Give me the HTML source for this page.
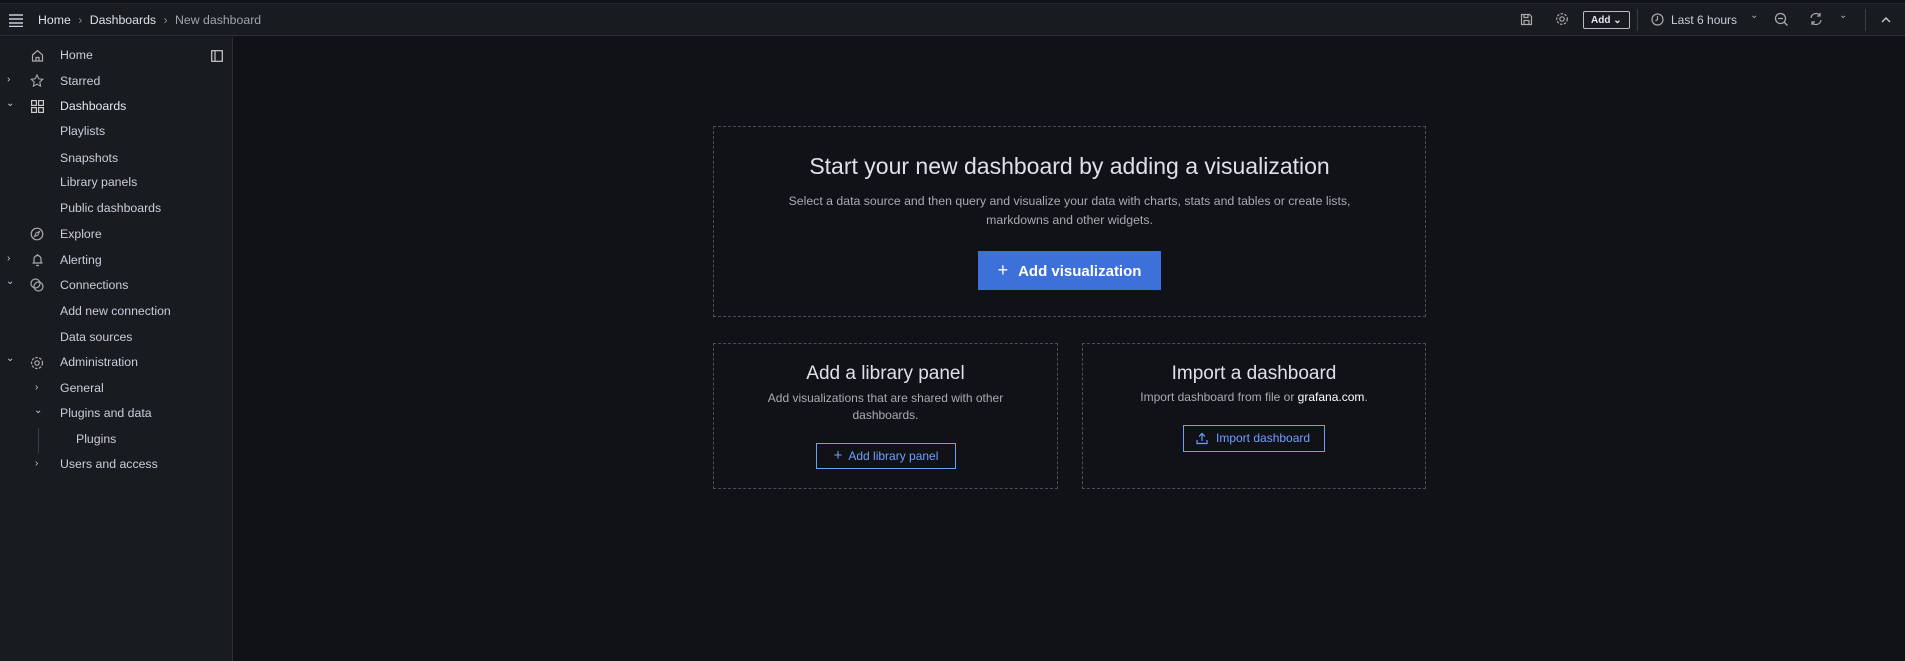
<!DOCTYPE html>
<html><head><meta charset="utf-8"><style>
*{box-sizing:border-box;margin:0;padding:0}
body{width:1905px;height:661px;background:#111217;font-family:"Liberation Sans",sans-serif;color:#ccccdc;position:relative;overflow:hidden}
.top{position:absolute;left:0;top:0;width:1905px;height:4px;background:#111217;border-bottom:1px solid #24272d}
.hdr{position:absolute;left:0;top:4px;width:1905px;height:32px;background:#181b1f;border-bottom:1px solid #2c2f35}
.side{position:absolute;left:0;top:37px;width:233px;height:624px;background:#181b1f;border-right:1px solid #2c2f35}
.a{position:absolute;white-space:nowrap}
.si{position:absolute;left:60px;font-size:12.3px;color:#ccccdc}
.chev{position:absolute;font-size:10px;color:#ccccdc}
.box{position:absolute;border:1px dashed #4a4d55}
.ctr{position:absolute;left:0;right:0;text-align:center}
svg{display:block}
</style></head><body>
<div class="top"></div>
<div class="hdr">
 <svg class="a" style="left:8px;top:9px" width="16" height="14"><path d="M1 2h14M1 6h14M1 10h14M1 13.5h14" stroke="#ccccdc" stroke-width="1.6"/></svg>
 <div class="a" style="left:38px;top:9px;font-size:12.3px;color:#e0e0ea">Home <span style="color:#888;margin:0 4px">›</span> Dashboards <span style="color:#888;margin:0 4px">›</span> <span style="color:#9fa3ad">New dashboard</span></div>
 <svg class="a" style="left:1520px;top:9px" width="13" height="13"><path d="M1.5 1.5h8l2 2v8h-10z M4 1.5v3h4v-3 M4 11.5v-4h5v4" fill="none" stroke="#aaa" stroke-width="1.2"/></svg>
 <svg class="a" style="left:1555px;top:8px" width="14" height="14"><circle cx="7" cy="7" r="2.2" fill="none" stroke="#aaa" stroke-width="1.2"/><circle cx="7" cy="7" r="5.3" fill="none" stroke="#aaa" stroke-width="1.2" stroke-dasharray="2.5 1.4"/></svg>
 <div class="a" style="left:1583px;top:7px;width:47px;height:18px;border:1px solid #bbb;border-radius:2px;font-size:10px;font-weight:bold;color:#e6e6f0;padding:3px 0 0 7px">Add ⌄</div>
 <div class="a" style="left:1637px;top:5px;width:1px;height:22px;background:#3a3d44"></div>
 <svg class="a" style="left:1651px;top:9px" width="13" height="13"><circle cx="6.5" cy="6.5" r="5.5" fill="none" stroke="#aaa" stroke-width="1.2"/><path d="M6.5 3v3.5l-2 1.5" fill="none" stroke="#aaa" stroke-width="1.2"/></svg>
 <div class="a" style="left:1671px;top:9px;font-size:12px;color:#ccccdc">Last 6 hours</div>
 <div class="a" style="left:1750px;top:6px;font-size:10px;color:#aaa">⌄</div>
 <svg class="a" style="left:1774px;top:8px" width="15" height="15"><circle cx="6.5" cy="6.5" r="5" fill="none" stroke="#aaa" stroke-width="1.3"/><path d="M4 6.5h5M10 10l3.5 3.5" stroke="#aaa" stroke-width="1.3"/></svg>
 <svg class="a" style="left:1809px;top:8px" width="14" height="14"><path d="M2 6a5 5 0 0 1 9-2.5M12 8a5 5 0 0 1-9 2.5M11 1v3h-3M3 13v-3h3" fill="none" stroke="#aaa" stroke-width="1.2"/></svg>
 <div class="a" style="left:1839px;top:6px;font-size:10px;color:#aaa">⌄</div>
 <div class="a" style="left:1865px;top:5px;width:1px;height:22px;background:#3a3d44"></div>
 <svg class="a" style="left:1881px;top:12px" width="10" height="7"><path d="M1 6l4-4 4 4" fill="none" stroke="#ccc" stroke-width="1.4"/></svg>
</div>
<div class="side">
 <svg class="a" style="left:211px;top:13px" width="12" height="12"><rect x="0.7" y="0.7" width="10.6" height="10.6" fill="none" stroke="#ccc" stroke-width="1.2"/><path d="M4 1v10" stroke="#ccc" stroke-width="1.2"/></svg>
</div>
<svg class="a" style="left:31px;top:49px" width="13" height="13"><path d="M1.5 6L6.5 1.5 11.5 6v6h-10z M5 12V8.5h3V12" fill="none" stroke="#aaa" stroke-width="1.2"/></svg>
<div class="si a" style="top:48px">Home</div>
<div class="chev a" style="left:7px;top:74px">›</div>
<svg class="a" style="left:30px;top:74px" width="14" height="13"><path d="M7 1l1.8 3.8 4 .5-3 2.8.8 4L7 10.2 3.4 12.1l.8-4-3-2.8 4-.5z" fill="none" stroke="#aaa" stroke-width="1.1"/></svg>
<div class="si a" style="top:74px">Starred</div>
<div class="chev a" style="left:6px;top:98px">⌄</div>
<svg class="a" style="left:31px;top:100px" width="13" height="13"><g fill="none" stroke="#ccc" stroke-width="1.2"><rect x=".6" y=".6" width="4.8" height="4.8"/><rect x="7.6" y=".6" width="4.8" height="4.8"/><rect x=".6" y="7.6" width="4.8" height="4.8"/><rect x="7.6" y="7.6" width="4.8" height="4.8"/></g></svg>
<div class="si a" style="top:99px;color:#e6e6f0">Dashboards</div>
<div class="si a" style="top:124px">Playlists</div>
<div class="si a" style="top:151px">Snapshots</div>
<div class="si a" style="top:175px">Library panels</div>
<div class="si a" style="top:201px">Public dashboards</div>
<svg class="a" style="left:30px;top:227px" width="14" height="14"><circle cx="7" cy="7" r="5.8" fill="none" stroke="#aaa" stroke-width="1.2"/><path d="M9.5 4.5L8 8 4.5 9.5 6 6z" fill="none" stroke="#aaa" stroke-width="1"/></svg>
<div class="si a" style="top:227px">Explore</div>
<div class="chev a" style="left:7px;top:253px">›</div>
<svg class="a" style="left:31px;top:253px" width="13" height="14"><path d="M3 10V6a3.5 3.5 0 0 1 7 0v4zM1.5 10h10M5 12.5h3M6.5 1v1" fill="none" stroke="#aaa" stroke-width="1.2"/></svg>
<div class="si a" style="top:253px">Alerting</div>
<div class="chev a" style="left:6px;top:276px">⌄</div>
<svg class="a" style="left:30px;top:278px" width="14" height="14"><circle cx="5.5" cy="5.5" r="4.5" fill="none" stroke="#aaa" stroke-width="1.2"/><circle cx="8.5" cy="8.5" r="4.5" fill="none" stroke="#aaa" stroke-width="1.2"/></svg>
<div class="si a" style="top:278px">Connections</div>
<div class="si a" style="top:304px">Add new connection</div>
<div class="si a" style="top:330px">Data sources</div>
<div class="chev a" style="left:6px;top:353px">⌄</div>
<svg class="a" style="left:30px;top:356px" width="14" height="14"><circle cx="7" cy="7" r="2.2" fill="none" stroke="#aaa" stroke-width="1.2"/><circle cx="7" cy="7" r="5.5" fill="none" stroke="#aaa" stroke-width="1.2" stroke-dasharray="2.6 1.4"/></svg>
<div class="si a" style="top:355px">Administration</div>
<div class="chev a" style="left:35px;top:382px">›</div>
<div class="si a" style="top:381px">General</div>
<div class="chev a" style="left:34px;top:405px">⌄</div>
<div class="si a" style="top:406px">Plugins and data</div>
<div class="a" style="left:38px;top:428px;width:1px;height:25px;background:#3a3d44"></div>
<div class="si a" style="left:76px;top:432px">Plugins</div>
<div class="chev a" style="left:35px;top:458px">›</div>
<div class="si a" style="top:457px">Users and access</div>

<div class="box" style="left:713px;top:126px;width:713px;height:191px">
 <div class="ctr" style="top:26px;font-size:23px;color:#e0e0ea">Start your new dashboard by adding a visualization</div>
 <div class="ctr" style="top:65px;font-size:12.3px;color:#a8abb5;line-height:19px">Select a data source and then query and visualize your data with charts, stats and tables or create lists,<br>markdowns and other widgets.</div>
 <div class="a" style="left:264px;top:124px;width:183px;height:39px;background:#3d71d9;color:#fff;font-size:15px;font-weight:bold;text-align:center;line-height:39px"><span style="font-weight:normal;font-size:18px;margin-right:10px">+</span>Add visualization</div>
</div>
<div class="box" style="left:713px;top:343px;width:345px;height:146px">
 <div class="ctr" style="top:19px;font-size:19px;color:#e0e0ea">Add a library panel</div>
 <div class="ctr" style="top:46px;font-size:12px;color:#a8abb5;line-height:17px">Add visualizations that are shared with other<br>dashboards.</div>
 <div class="a" style="left:102px;top:99px;width:140px;height:26px;border:1px solid #6e9fff;color:#6e9fff;font-size:12px;text-align:center;line-height:24px"><span style="font-size:15px;margin-right:6px">+</span>Add library panel</div>
</div>
<div class="box" style="left:1082px;top:343px;width:344px;height:146px">
 <div class="ctr" style="top:19px;font-size:19px;color:#e0e0ea">Import a dashboard</div>
 <div class="ctr" style="top:46px;font-size:12px;color:#a8abb5">Import dashboard from file or <span style="color:#fff">grafana.com</span>.</div>
 <div class="a" style="left:100px;top:81px;width:142px;height:27px;border:1px solid #6e9fff;color:#6e9fff;font-size:12px;line-height:25px;padding-left:32px">Import dashboard</div>
 <svg class="a" style="left:113px;top:88px" width="12" height="13"><path d="M6 9V1.5M3 4.5l3-3 3 3M1 8v3.5h10V8" fill="none" stroke="#6e9fff" stroke-width="1.2"/></svg>
</div>
</body></html>
